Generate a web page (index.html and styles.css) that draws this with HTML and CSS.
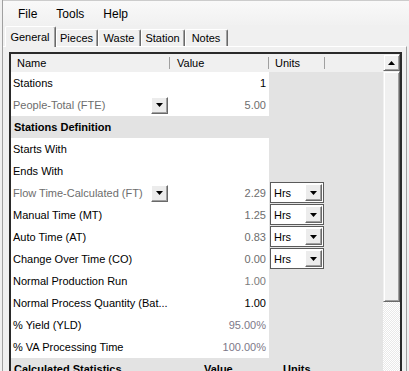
FILE: index.html
```html
<!DOCTYPE html>
<html>
<head>
<meta charset="utf-8">
<link rel="stylesheet" href="styles.css">
</head>
<body>
<div class="window">
  <div class="menubar">
    <span class="menu-item">File</span>
    <span class="menu-item">Tools</span>
    <span class="menu-item">Help</span>
  </div>
  <div class="tabstrip">
    <div class="tab active w-general">General</div>
    <div class="tab w-pieces">Pieces</div>
    <div class="tab w-waste">Waste</div>
    <div class="tab w-station">Station</div>
    <div class="tab w-notes">Notes</div>
  </div>
  <div class="tabpage">
    <div class="grid">
      <div class="grid-body">
        <div class="hrow">
          <div class="hcell c-name">Name</div>
          <div class="hcell c-value">Value</div>
          <div class="hcell c-units">Units</div>
          <div class="hcell c-extra"></div>
        </div>

        <div class="row">
          <div class="name">Stations</div>
          <div class="value">1</div>
          <div class="units"></div>
          <div class="extra"></div>
        </div>
        <div class="row">
          <div class="name dim">People-Total (FTE)
            <span class="dd"><svg width="7" height="4" viewBox="0 0 7 4"><polygon points="0,0 7,0 3.5,4" fill="#000"/></svg></span>
          </div>
          <div class="value dim">5.00</div>
          <div class="units"></div>
          <div class="extra"></div>
        </div>
        <div class="row section">Stations Definition</div>
        <div class="row">
          <div class="name">Starts With</div>
          <div class="value"></div>
          <div class="units"></div>
          <div class="extra"></div>
        </div>
        <div class="row">
          <div class="name">Ends With</div>
          <div class="value"></div>
          <div class="units"></div>
          <div class="extra"></div>
        </div>
        <div class="row">
          <div class="name dim">Flow Time-Calculated (FT)
            <span class="dd"><svg width="7" height="4" viewBox="0 0 7 4"><polygon points="0,0 7,0 3.5,4" fill="#000"/></svg></span>
          </div>
          <div class="value dim">2.29</div>
          <div class="units">
            <div class="combo">Hrs<span class="dd"><svg width="7" height="4" viewBox="0 0 7 4"><polygon points="0,0 7,0 3.5,4" fill="#000"/></svg></span></div>
          </div>
          <div class="extra"></div>
        </div>
        <div class="row">
          <div class="name">Manual Time (MT)</div>
          <div class="value dim">1.25</div>
          <div class="units">
            <div class="combo">Hrs<span class="dd"><svg width="7" height="4" viewBox="0 0 7 4"><polygon points="0,0 7,0 3.5,4" fill="#000"/></svg></span></div>
          </div>
          <div class="extra"></div>
        </div>
        <div class="row">
          <div class="name">Auto Time (AT)</div>
          <div class="value dim">0.83</div>
          <div class="units">
            <div class="combo">Hrs<span class="dd"><svg width="7" height="4" viewBox="0 0 7 4"><polygon points="0,0 7,0 3.5,4" fill="#000"/></svg></span></div>
          </div>
          <div class="extra"></div>
        </div>
        <div class="row">
          <div class="name">Change Over Time (CO)</div>
          <div class="value dim">0.00</div>
          <div class="units">
            <div class="combo">Hrs<span class="dd"><svg width="7" height="4" viewBox="0 0 7 4"><polygon points="0,0 7,0 3.5,4" fill="#000"/></svg></span></div>
          </div>
          <div class="extra"></div>
        </div>
        <div class="row">
          <div class="name">Normal Production Run</div>
          <div class="value light">1.00</div>
          <div class="units"></div>
          <div class="extra"></div>
        </div>
        <div class="row">
          <div class="name">Normal Process Quantity (Bat...</div>
          <div class="value">1.00</div>
          <div class="units"></div>
          <div class="extra"></div>
        </div>
        <div class="row">
          <div class="name">% Yield (YLD)</div>
          <div class="value pct">95.00%</div>
          <div class="units"></div>
          <div class="extra"></div>
        </div>
        <div class="row">
          <div class="name">% VA Processing Time</div>
          <div class="value pct">100.00%</div>
          <div class="units"></div>
          <div class="extra"></div>
        </div>
        <div class="row section">
          <span class="s-name">Calculated Statistics</span>
          <span class="s-value">Value</span>
          <span class="s-units">Units</span>
        </div>
      </div>
      <div class="scrollbar">
        <div class="sb-btn"><svg width="7" height="4" viewBox="0 0 7 4"><polygon points="3.5,0 7,4 0,4" fill="#000"/></svg></div>
        <div class="sb-thumb"></div>
        <div class="sb-track"></div>
      </div>
    </div>
  </div>
</div>
</body>
</html>
```
FILE: styles.css
```css
* { box-sizing: border-box; }
html, body { margin: 0; padding: 0; }
body {
  width: 409px;
  height: 371px;
  overflow: hidden;
  background: #f0f0f0;
  font-family: "Liberation Sans", Arial, sans-serif;
  font-size: 11px;
  color: #000;
}
.window {
  height: 371px;
  margin-left: 2px;
  border-left: 1px solid #a0a0a0;
}

/* menu */
.menubar {
  height: 25px;
  display: flex;
  align-items: center;
  gap: 19px;
  padding: 2px 0 0 15px;
  border-top: 1px solid #cccccc;
  background: linear-gradient(#f9f9f9, #f1f1f1);
  font-size: 12px;
}

/* tabs */
.tabstrip {
  height: 21px;
  display: flex;
  align-items: flex-end;
  padding-left: 2px;
}
.tab {
  height: 17px;
  display: flex;
  align-items: center;
  justify-content: center;
  background: #f0f0f0;
  border-top: 1px solid #ffffff;
  border-left: 1px solid #ffffff;
  border-right: 1px solid #696969;
  box-shadow: inset -1px 0 0 #a0a0a0;
  border-radius: 2px 2px 0 0;
  padding-right: 1px;
}
.tab.active {
  position: relative;
  z-index: 1;
  height: 21px;
  margin-bottom: -1px;
  padding-bottom: 1px;
}
.w-general { width: 51px; }
.w-pieces { width: 42px; }
.w-waste { width: 43px; }
.w-station { width: 44px; }
.w-notes { width: 43px; }

.tabpage {
  width: 404px;
  height: 325px;
  border-top: 1px solid #ffffff;
  border-right: 1px solid #a0a0a0;
  padding: 5px 0 0 6px;
}

/* grid */
.grid {
  display: flex;
  width: 393px;
  height: 330px;
  border: 2px solid #2a2a2a;
  border-bottom: none;
  background: #e3e3e3;
}
.grid-body { width: 372px; }

.hrow {
  display: flex;
  height: 18px;
  background: #f0f0f0;
}
.hcell {
  display: flex;
  align-items: center;
  padding-left: 6px;
  background: linear-gradient(#a0a0a0, #a0a0a0) right 3px / 1px 12px no-repeat;
}
.c-name { width: 159px; }
.c-value { width: 99px; padding-left: 7px; }
.c-units { width: 56px; }
.c-extra { width: 58px; background: none; }

.row {
  display: flex;
  height: 22px;
}
.name {
  width: 159px;
  background: #ffffff;
  display: flex;
  align-items: center;
  justify-content: space-between;
  padding: 0 2px 0 2px;
  white-space: nowrap;
}
.value {
  width: 99px;
  background: #ffffff;
  display: flex;
  align-items: center;
  justify-content: flex-end;
  padding-right: 3px;
}
.units {
  width: 56px;
  padding-left: 1px;
}
.extra { width: 58px; }

.dim { color: #6d6d6d; }
.light { color: #7c7c7c; }
.pct { color: #7d7888; }

.section {
  background: #e3e3e3;
  font-weight: bold;
  align-items: center;
  padding-left: 3px;
}
.s-name { width: 190px; }
.s-value { width: 79px; }

.dd {
  width: 17px;
  height: 17px;
  display: flex;
  align-items: center;
  justify-content: center;
  background: #ececec;
  border-top: 1px solid #ffffff;
  border-left: 1px solid #ffffff;
  border-right: 1px solid #696969;
  border-bottom: 1px solid #696969;
  box-shadow: inset -1px -1px 0 #a0a0a0;
}

.combo {
  width: 54px;
  height: 21px;
  border: 1px solid #5a5a5a;
  background: #ffffff;
  display: flex;
  align-items: center;
  justify-content: space-between;
  padding: 0 1px 0 3px;
  color: #000;
}

/* scrollbar */
.scrollbar {
  width: 17px;
  display: flex;
  flex-direction: column;
}
.sb-btn {
  height: 17px;
  display: flex;
  align-items: center;
  justify-content: center;
  background: #f0f0f0;
  border-top: 1px solid #f0f0f0;
  border-left: 1px solid #f0f0f0;
  border-right: 1px solid #696969;
  border-bottom: 1px solid #696969;
  box-shadow: inset 1px 1px 0 #ffffff, inset -1px -1px 0 #a0a0a0;
}
.sb-thumb {
  height: 231px;
  background: #f0f0f0;
  border-top: 1px solid #f0f0f0;
  border-left: 1px solid #f0f0f0;
  border-right: 1px solid #696969;
  border-bottom: 1px solid #696969;
  box-shadow: inset 1px 1px 0 #ffffff, inset -1px -1px 0 #a0a0a0;
}
.sb-track {
  flex: 1;
  background: repeating-conic-gradient(#ffffff 0 25%, #e9e9e9 0 50%) 0 0 / 2px 2px;
}
```
